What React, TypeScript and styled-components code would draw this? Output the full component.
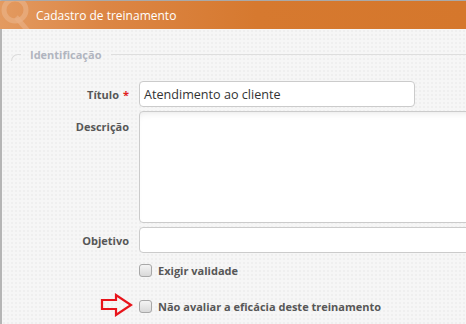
import styled, { createGlobalStyle } from "styled-components";

const GlobalStyle = createGlobalStyle`
  html, body {
    margin: 0;
    padding: 0;
    width: 466px;
    height: 324px;
    overflow: hidden;
  }
  body {
    font-family: "Open Sans", "Liberation Sans", sans-serif;
    background: #f6f6f6;
  }
`;

const Window = styled.div`
  position: relative;
  height: 324px;
  border-top: 1px solid #a9a9a9;
  border-left: 2px solid #b5b5b5;
  background-color: #f6f6f6;
  background-image: radial-gradient(#efefef 1px, transparent 1px);
  background-size: 4px 4px;
  box-sizing: border-box;
`;

const TitleBar = styled.div`
  position: relative;
  height: 28px;
  margin-left: -2px;
  display: flex;
  align-items: center;
  padding-left: 36px;
  background: linear-gradient(90deg, #e39a60 0%, #dc8645 22%, #d6792f 55%, #d5772c 100%);
  color: #fff;
  font-size: 12px;
  overflow: hidden;
`;

const Logo = styled.svg`
  position: absolute;
  left: 0;
  top: -6px;
`;

const Legend = styled.div`
  display: flex;
  align-items: center;
  height: 20px;
  margin: 15px 0 17px 9px;
`;

const Corner = styled.span`
  width: 9px;
  height: 6px;
  margin: 6px 9px 0 0;
  border-top: 1px solid #dcdcdc;
  border-left: 1px solid #dcdcdc;
  border-top-left-radius: 8px;
`;

const LegendText = styled.span`
  color: #b1b5bf;
  font-weight: 700;
  font-size: 11px;
  margin-right: 10px;
`;

const LegendLine = styled.span`
  flex: 1;
  height: 1px;
  background: #dedede;
`;

const Form = styled.div`
  display: grid;
  grid-template-columns: 127px 1fr;
  column-gap: 10px;
  row-gap: 4px;
`;

const Label = styled.label<{ $top?: boolean }>`
  display: flex;
  justify-content: flex-end;
  align-items: ${({ $top }) => ($top ? "flex-start" : "center")};
  padding-top: ${({ $top }) => ($top ? "8px" : "0")};
  color: #575757;
  font-weight: 700;
  font-size: 11px;
`;

const Required = styled.span`
  color: #e0201c;
  margin-left: 4px;
`;

const Input = styled.div<{ $width?: number }>`
  height: 26px;
  box-sizing: border-box;
  width: ${({ $width }) => ($width ? `${$width}px` : "calc(100% + 10px)")};
  border: 1px solid #cbcbcb;
  border-radius: 4px;
  background: #fff;
  display: flex;
  align-items: center;
  padding-left: 4px;
  color: #333;
  font-size: 12.6px;
`;

const TextArea = styled.div`
  height: 112px;
  box-sizing: border-box;
  width: calc(100% + 10px);
  border: 1px solid #cbcbcb;
  border-radius: 4px;
  background: #fff;
  box-shadow: inset 0 6px 8px -6px rgba(0, 0, 0, 0.12);
`;

const Options = styled.div`
  grid-column: 2;
  display: flex;
  flex-direction: column;
  gap: 20px;
  margin-top: 5px;
`;

const Check = styled.div`
  position: relative;
  display: flex;
  align-items: center;
  gap: 6px;
  height: 16px;
  color: #575757;
  font-weight: 700;
  font-size: 11px;
`;

const Box = styled.span`
  width: 11px;
  height: 11px;
  border: 1px solid #a8a8a8;
  border-radius: 3px;
  background: linear-gradient(#f4f4f4, #d9d9d9);
`;

const Arrow = styled.svg`
  position: absolute;
  left: -39px;
  top: -5px;
`;

export default function App() {
  return (
    <>
      <GlobalStyle />
      <Window>
        <TitleBar>
          <Logo width="36" height="40" viewBox="0 0 36 40">
            <circle cx="15" cy="15" r="11" fill="none" stroke="#eab084" strokeWidth="5" opacity="0.7" />
            <path d="M16 22 L28 36" stroke="#eab084" strokeWidth="5" opacity="0.7" />
          </Logo>
          Cadastro de treinamento
        </TitleBar>

        <Legend>
          <Corner />
          <LegendText>Identificação</LegendText>
          <LegendLine />
        </Legend>

        <Form>
          <Label>
            Título<Required>*</Required>
          </Label>
          <Input $width={276}>Atendimento ao cliente</Input>

          <Label $top>Descrição</Label>
          <TextArea />

          <Label>Objetivo</Label>
          <Input />

          <Options>
            <Check>
              <Box />
              Exigir validade
            </Check>
            <Check>
              <Arrow width="34" height="24" viewBox="0 0 34 24">
                <polygon
                  points="2,7 16,7 16,2 31,12 16,22 16,16 2,16"
                  fill="none"
                  stroke="#e8141b"
                  strokeWidth="2.2"
                  strokeLinejoin="miter"
                />
              </Arrow>
              <Box />
              Não avaliar a eficácia deste treinamento
            </Check>
          </Options>
        </Form>
      </Window>
    </>
  );
}
